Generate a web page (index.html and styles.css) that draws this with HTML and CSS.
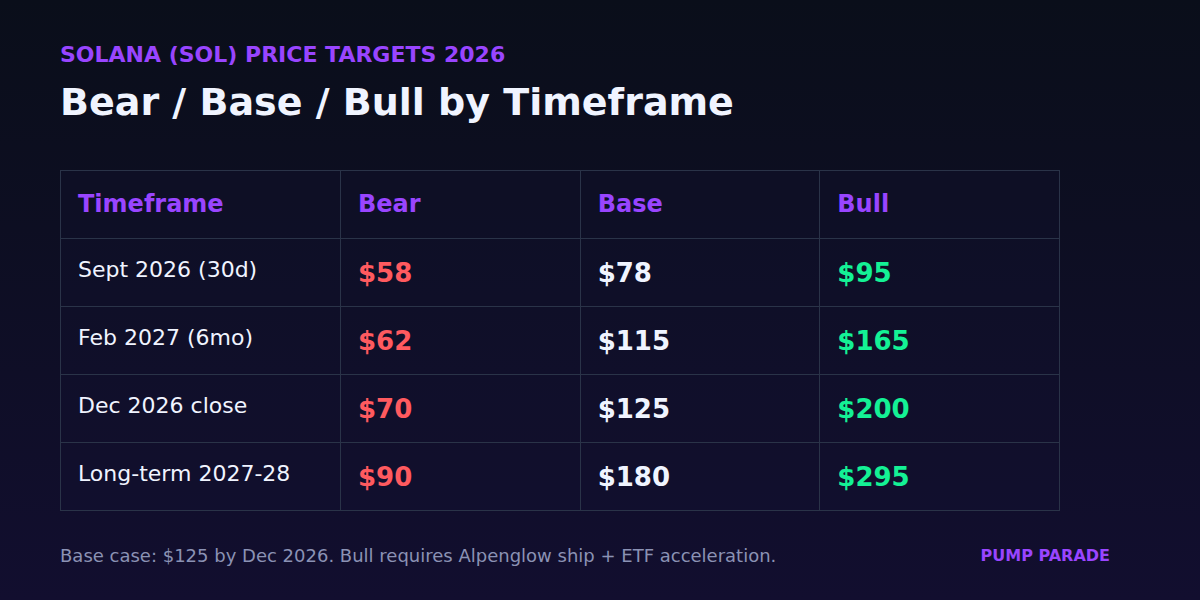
FILE: index.html
```html
<!DOCTYPE html>
<html>
<head>
<meta charset="utf-8">
<link rel="stylesheet" href="styles.css">
</head>
<body>
<main class="card">
  <div class="eyebrow">SOLANA (SOL) PRICE TARGETS 2026</div>
  <h1 class="title">Bear / Base / Bull by Timeframe</h1>
  <table class="targets">
    <thead>
      <tr><th>Timeframe</th><th>Bear</th><th>Base</th><th>Bull</th></tr>
    </thead>
    <tbody>
      <tr><td class="label">Sept 2026 (30d)</td><td class="bear">$58</td><td class="base">$78</td><td class="bull">$95</td></tr>
      <tr><td class="label">Feb 2027 (6mo)</td><td class="bear">$62</td><td class="base">$115</td><td class="bull">$165</td></tr>
      <tr><td class="label">Dec 2026 close</td><td class="bear">$70</td><td class="base">$125</td><td class="bull">$200</td></tr>
      <tr><td class="label">Long-term 2027-28</td><td class="bear">$90</td><td class="base">$180</td><td class="bull">$295</td></tr>
    </tbody>
  </table>
  <footer class="foot">
    <span class="note">Base case: $125 by Dec 2026. Bull requires Alpenglow ship + ETF acceleration.</span>
    <span class="brand">PUMP PARADE</span>
  </footer>
</main>
</body>
</html>
```
FILE: styles.css
```css
* { box-sizing: border-box; }
html, body {
  margin: 0;
  padding: 0;
  width: 1200px;
  height: 600px;
  overflow: hidden;
}
body {
  font-family: "DejaVu Sans", sans-serif;
  background: linear-gradient(180deg, #0a0e1a 0%, #120e2f 100%);
  color: #f0f4ff;
}
.card {
  padding: 42px 60px 0 60px;
  display: flex;
  flex-direction: column;
}
.eyebrow {
  font-size: 22px;
  font-weight: bold;
  color: #9945ff;
  line-height: 26px;
}
.title {
  margin: 11px 0 0 0;
  font-size: 38px;
  font-weight: bold;
  line-height: 46px;
  color: #f0f4ff;
}
.targets {
  margin-top: 45px;
  border-collapse: collapse;
  width: 1000px;
  table-layout: fixed;
  background: rgba(20, 18, 50, 0.25);
}
.targets th, .targets td {
  border: 1px solid #2a3348;
  height: 68px;
  padding: 19px 17px 0 17px;
  text-align: left;
  vertical-align: top;
}
.targets th:first-child, .targets td:first-child { width: 280px; }
.targets th {
  font-size: 24px;
  font-weight: bold;
  line-height: 28px;
  color: #9945ff;
}
.targets td {
  font-size: 26px;
  line-height: 30px;
  font-weight: bold;
  padding-top: 19px;
}
.targets td.label {
  font-size: 22px;
  line-height: 26px;
  font-weight: normal;
  color: #f0f4ff;
  padding-top: 18px;
}
.bear { color: #ff5a5f; }
.base { color: #f0f4ff; }
.bull { color: #14f195; }
.foot {
  margin-top: 34px;
  width: 1050px;
  display: flex;
  justify-content: space-between;
  align-items: center;
}
.note {
  font-size: 18px;
  line-height: 22px;
  color: #8b92b4;
}
.brand {
  font-size: 16px;
  line-height: 22px;
  font-weight: bold;
  color: #9945ff;
}
```
